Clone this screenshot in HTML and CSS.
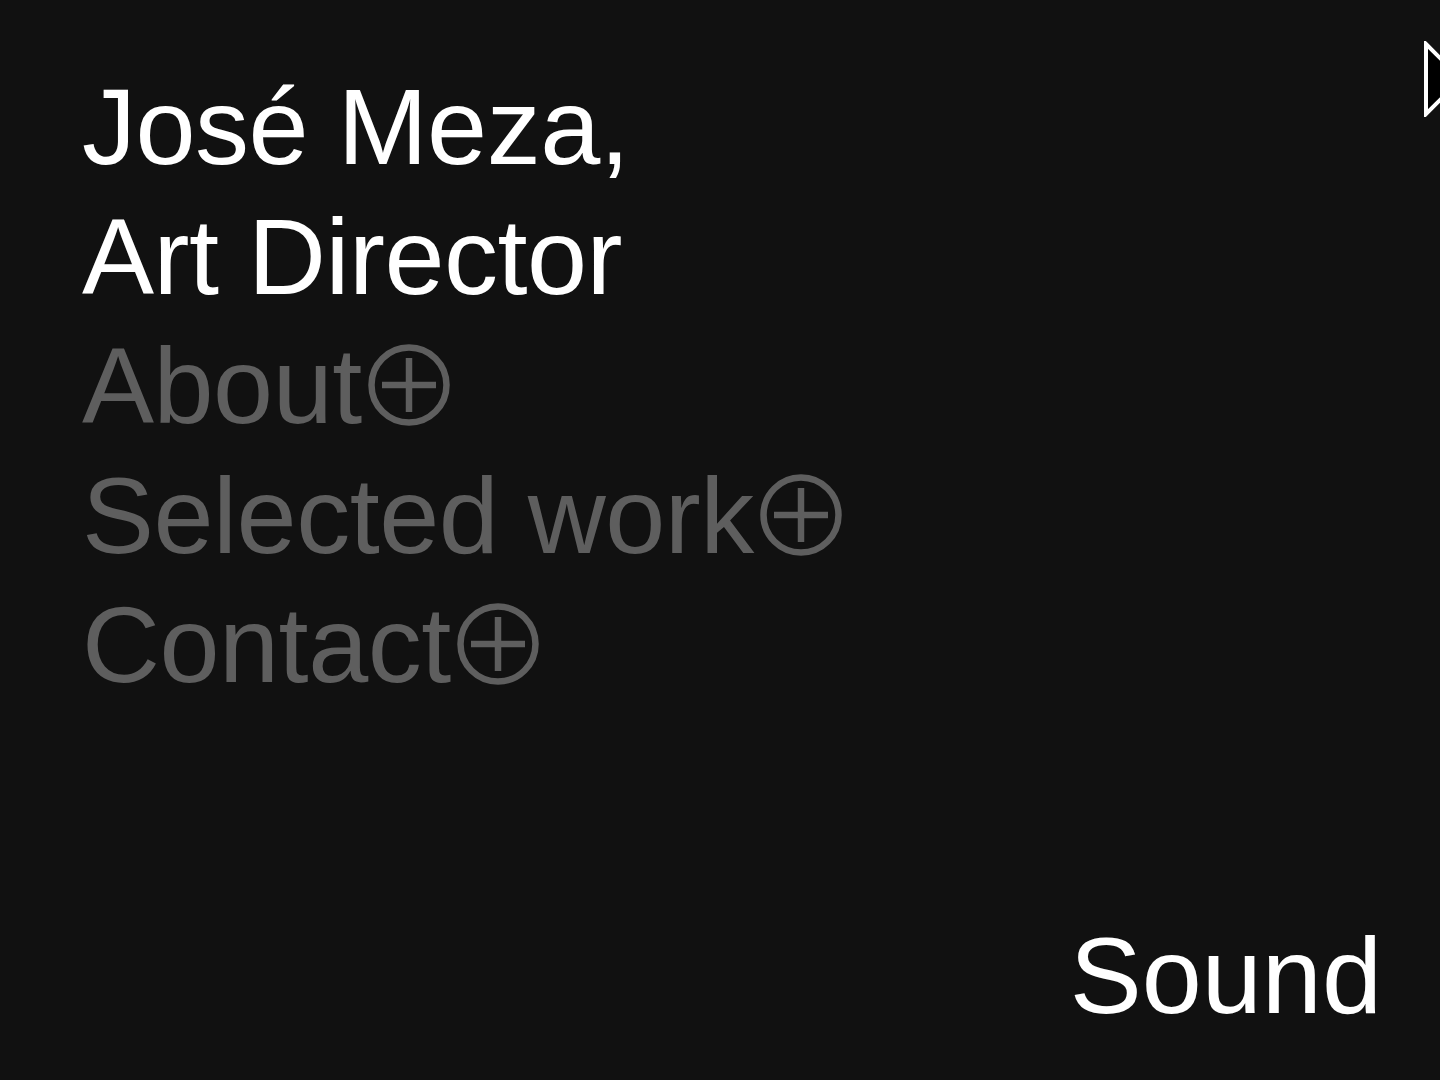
FILE: index.html
```html
<!DOCTYPE html>
<html lang="en">
<head>
<meta charset="utf-8">
<title>José Meza, Art Director</title>
<link rel="stylesheet" href="styles.css">
</head>
<body>
<main class="page">
  <header class="intro">
    <h1 class="title">José Meza,<br>Art Director</h1>
    <nav class="menu">
      <a class="menu-item" href="#about">About<svg class="plus" viewBox="0 0 82 82" aria-hidden="true"><circle cx="41" cy="41" r="37.5" /><path d="M14 41H68M41 14V68" /></svg></a>
      <a class="menu-item" href="#work">Selected work<svg class="plus" viewBox="0 0 82 82" aria-hidden="true"><circle cx="41" cy="41" r="37.5" /><path d="M14 41H68M41 14V68" /></svg></a>
      <a class="menu-item" href="#contact">Contact<svg class="plus" viewBox="0 0 82 82" aria-hidden="true"><circle cx="41" cy="41" r="37.5" /><path d="M14 41H68M41 14V68" /></svg></a>
    </nav>
  </header>
  <footer class="bottom">
    <button class="sound" type="button">Sound</button>
  </footer>
  <svg class="cursor" viewBox="0 0 42 76" aria-hidden="true"><path d="M3 3 L38 38 L3 73 Z" /></svg>
</main>
</body>
</html>
```
FILE: styles.css
```css
html, body {
  margin: 0;
  padding: 0;
  background: #111111;
}

body {
  overflow: hidden;
  font-family: "Liberation Sans", Arial, sans-serif;
}

.page {
  position: relative;
  height: 1080px;
  display: flex;
  flex-direction: column;
  justify-content: space-between;
  box-sizing: border-box;
  padding: 62px 58px 39px 82px;
  overflow: hidden;
}

.intro {
  display: flex;
  flex-direction: column;
}

.title {
  margin: 0;
  font-size: 108px;
  line-height: 1.2;
  font-weight: 400;
  color: #ffffff;
  letter-spacing: -0.5px;
}

.menu {
  display: flex;
  flex-direction: column;
}

.menu-item {
  font-size: 108px;
  line-height: 1.2;
  color: #5e5e5e;
  text-decoration: none;
  white-space: nowrap;
  letter-spacing: -0.5px;
}

.plus {
  width: 82px;
  height: 82px;
  margin-left: 6px;
  vertical-align: -3px;
  fill: none;
  stroke: #5e5e5e;
  stroke-width: 6.5;
}

.bottom {
  display: flex;
  justify-content: flex-end;
}

.sound {
  background: none;
  border: 0;
  padding: 0;
  margin: 0;
  font-family: "Liberation Sans", Arial, sans-serif;
  font-size: 108px;
  line-height: 1.2;
  color: #ffffff;
  cursor: pointer;
}

.cursor {
  position: absolute;
  left: 1423px;
  top: 41px;
  width: 42px;
  height: 76px;
  fill: #000000;
  stroke: #ffffff;
  stroke-width: 4;
  stroke-linejoin: miter;
}
```
